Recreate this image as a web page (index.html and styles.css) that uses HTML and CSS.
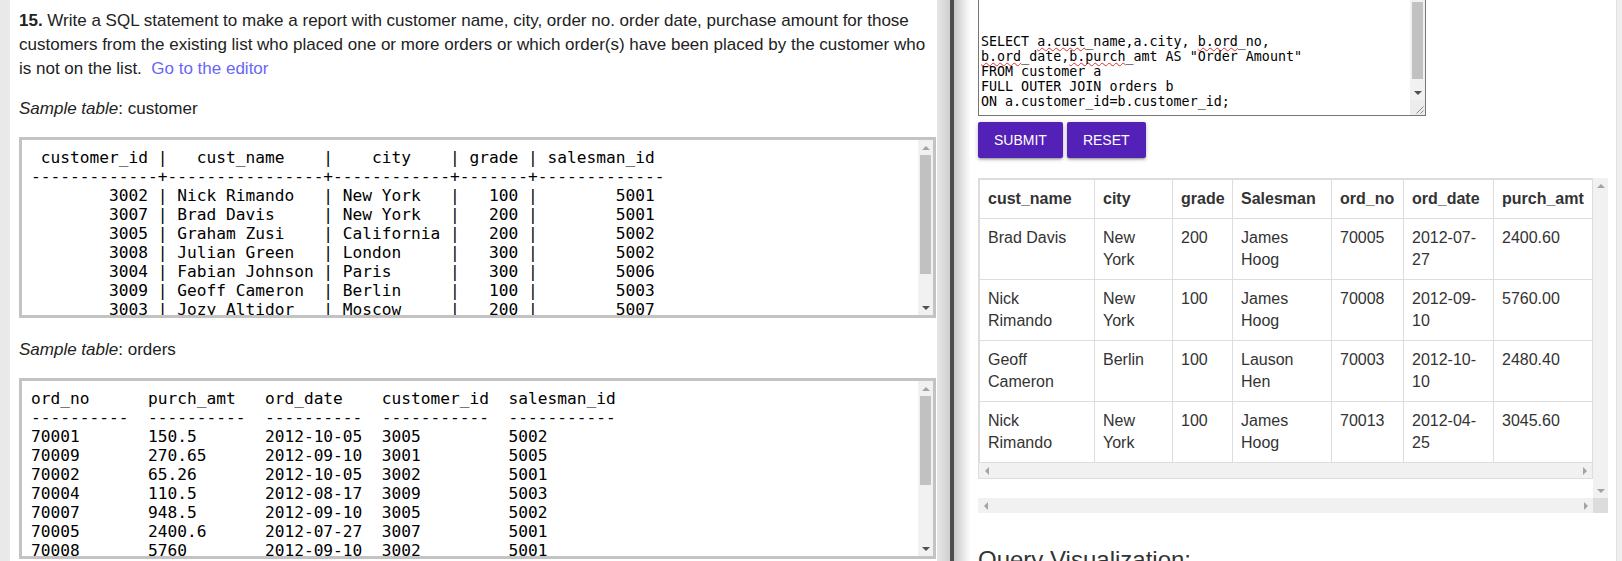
FILE: index.html
```html
<!DOCTYPE html>
<html lang="en">
<head>
<meta charset="utf-8">
<title>SQL Exercise 15</title>
<link rel="stylesheet" href="styles.css">
</head>
<body>
<div class="app">
  <section class="left-pane">
    <p class="question"><strong>15.</strong> Write a SQL statement to make a report with customer name, city, order no. order date, purchase amount for those customers from the existing list who placed one or more orders or which order(s) have been placed by the customer who is not on the list.&nbsp; <a href="#" class="editor-link">Go to the editor</a></p>
    <p class="caption"><em>Sample table</em>: customer</p>
    <div class="sample">
<pre class="sample-text"> customer_id |   cust_name    |    city    | grade | salesman_id
-------------+----------------+------------+-------+-------------
        3002 | Nick Rimando   | New York   |   100 |        5001
        3007 | Brad Davis     | New York   |   200 |        5001
        3005 | Graham Zusi    | California |   200 |        5002
        3008 | Julian Green   | London     |   300 |        5002
        3004 | Fabian Johnson | Paris      |   300 |        5006
        3009 | Geoff Cameron  | Berlin     |   100 |        5003
        3003 | Jozy Altidor   | Moscow     |   200 |        5007
        3001 | Brad Guzan     | London     |       |        5005</pre>
      <div class="vbar">
        <span class="sb-btn up off"></span>
        <span class="sb-track"><span class="sb-thumb thumb-customer"></span></span>
        <span class="sb-btn down"></span>
      </div>
    </div>
    <p class="caption"><em>Sample table</em>: orders</p>
    <div class="sample">
<pre class="sample-text">ord_no      purch_amt   ord_date    customer_id  salesman_id
----------  ----------  ----------  -----------  -----------
70001       150.5       2012-10-05  3005         5002
70009       270.65      2012-09-10  3001         5005
70002       65.26       2012-10-05  3002         5001
70004       110.5       2012-08-17  3009         5003
70007       948.5       2012-09-10  3005         5002
70005       2400.6      2012-07-27  3007         5001
70008       5760        2012-09-10  3002         5001
70010       1983.43     2012-10-10  3004         5006
70003       2480.4      2012-10-10  3009         5003
70012       250.45      2012-06-27  3008         5002
70011       75.29       2012-08-17  3003         5007
70013       3045.6      2012-04-25  3002         5001</pre>
      <div class="vbar">
        <span class="sb-btn up off"></span>
        <span class="sb-track"><span class="sb-thumb thumb-orders"></span></span>
        <span class="sb-btn down"></span>
      </div>
    </div>
  </section>
  <div class="gutter"></div>
  <section class="right-pane">
    <div class="editor">
      <div class="editor-text">


SELECT <span class="typo">a.cust</span>_name,a.city, <span class="typo">b.ord</span>_no,
<span class="typo">b.ord</span>_date,<span class="typo">b.purch</span>_amt AS "Order Amount"
FROM customer a
FULL OUTER JOIN orders b
ON a.customer_id=b.customer_id;</div>
      <div class="editor-side">
        <div class="vbar">
          <span class="sb-btn up off"></span>
          <span class="sb-track"><span class="sb-thumb thumb-editor"></span></span>
          <span class="sb-btn down"></span>
        </div>
        <div class="resizer">
          <svg width="15" height="15" viewBox="0 0 15 15" aria-hidden="true">
            <line x1="13.5" y1="6.5" x2="6.5" y2="13.5" stroke="#8a8a8a" stroke-width="1"/>
            <line x1="13.5" y1="10.5" x2="10.5" y2="13.5" stroke="#8a8a8a" stroke-width="1"/>
          </svg>
        </div>
      </div>
    </div>
    <div class="actions">
      <button class="btn" type="button">SUBMIT</button>
      <button class="btn" type="button">RESET</button>
    </div>
    <div class="result">
      <div class="result-view">
        <div class="table-wrap">
          <table class="result-table">
            <colgroup>
              <col class="c-name"><col class="c-city"><col class="c-grade"><col class="c-sales"><col class="c-ordno"><col class="c-date"><col class="c-amt">
            </colgroup>
            <thead>
              <tr><th>cust_name</th><th>city</th><th>grade</th><th>Salesman</th><th>ord_no</th><th>ord_date</th><th>purch_amt</th></tr>
            </thead>
            <tbody>
              <tr><td>Brad Davis</td><td>New York</td><td>200</td><td>James Hoog</td><td>70005</td><td>2012-07-27</td><td>2400.60</td></tr>
              <tr><td>Nick Rimando</td><td>New York</td><td>100</td><td>James Hoog</td><td>70008</td><td>2012-09-10</td><td>5760.00</td></tr>
              <tr><td>Geoff Cameron</td><td>Berlin</td><td>100</td><td>Lauson Hen</td><td>70003</td><td>2012-10-10</td><td>2480.40</td></tr>
              <tr><td>Nick Rimando</td><td>New York</td><td>100</td><td>James Hoog</td><td>70013</td><td>2012-04-25</td><td>3045.60</td></tr>
            </tbody>
          </table>
          <div class="hbar">
            <span class="sb-btn left off"></span>
            <span class="sb-track"></span>
            <span class="sb-btn right off"></span>
          </div>
        </div>
      </div>
      <div class="vbar">
        <span class="sb-btn up off"></span>
        <span class="sb-track"></span>
        <span class="sb-btn down off"></span>
      </div>
      <div class="hbar">
        <span class="sb-btn left off"></span>
        <span class="sb-track"></span>
        <span class="sb-btn right off"></span>
      </div>
      <div class="sb-corner"></div>
    </div>
    <h3 class="viz-title">Query Visualization:</h3>
  </section>
  <div class="edge"></div>
</div>
</body>
</html>
```

FILE: styles.css
```css
html, body {
  margin: 0;
  padding: 0;
  height: 100%;
  overflow: hidden;
  background: #fff;
}

body {
  font-family: "Liberation Sans", Arial, sans-serif;
  color: #333;
}

.app {
  display: flex;
  height: 561px;
  overflow: hidden;
}

/* ---------- scrollbars (classic look) ---------- */
.vbar {
  display: flex;
  flex-direction: column;
  width: 15px;
  flex: none;
  background: #f1f1f1;
}

.hbar {
  display: flex;
  height: 15px;
  flex: none;
  background: #f1f1f1;
}

.sb-btn {
  flex: none;
  width: 15px;
  height: 15px;
  display: flex;
  align-items: center;
  justify-content: center;
  color: #505050;
}

.sb-btn.off {
  color: #a3a3a3;
}

.sb-btn::before {
  content: "";
  width: 0;
  height: 0;
}

.sb-btn.up::before {
  border-left: 4px solid transparent;
  border-right: 4px solid transparent;
  border-bottom: 4px solid currentColor;
}

.sb-btn.down::before {
  border-left: 4px solid transparent;
  border-right: 4px solid transparent;
  border-top: 4px solid currentColor;
}

.sb-btn.left::before {
  border-top: 4px solid transparent;
  border-bottom: 4px solid transparent;
  border-right: 4px solid currentColor;
}

.sb-btn.right::before {
  border-top: 4px solid transparent;
  border-bottom: 4px solid transparent;
  border-left: 4px solid currentColor;
}

.sb-track {
  flex: 1;
  display: flex;
  flex-direction: column;
}

.sb-thumb {
  margin: 0 2px;
  background: #c1c1c1;
}

.thumb-customer { height: 119px; }
.thumb-orders { height: 89px; }
.thumb-editor { height: 77px; }

.sb-corner {
  background: #dcdcdc;
}

/* ---------- left pane ---------- */
.left-pane {
  flex: none;
  width: 917px;
  border-left: 10px solid #e9e9e9;
  padding: 9px 1px 0 9px;
  overflow: hidden;
  font-size: 17px;
  line-height: 24px;
  color: #222;
}

.question {
  margin: 0 0 16px;
}

.editor-link {
  color: #6767f5;
  text-decoration: none;
}

.caption {
  margin: 0 0 16px;
}

.sample {
  box-sizing: border-box;
  display: flex;
  height: 181px;
  margin: 0 0 20px;
  border: 3px solid #c3c3c3;
  background: #fff;
}

.sample-text {
  flex: 1;
  min-width: 0;
  margin: 0;
  padding: 8px 9px;
  overflow: hidden;
  font-family: "DejaVu Sans Mono", monospace;
  font-size: 16.2px;
  line-height: 19px;
  color: #000;
}

/* ---------- splitter ---------- */
.gutter {
  flex: none;
  width: 33px;
  background: linear-gradient(to right,
    #e6e6e6 0px, #d0d0d0 13px,
    #4e4e4e 13px, #4e4e4e 17px,
    #c9c9c9 17px, #fcfcfc 33px);
}

.edge {
  flex: none;
  width: 5px;
  border-left: 1px solid #e2e2e2;
  background: #efefef;
}

/* ---------- right pane ---------- */
.right-pane {
  flex: 1;
  min-width: 0;
  padding-left: 8px;
  overflow: hidden;
}

.editor {
  box-sizing: border-box;
  display: flex;
  width: 448px;
  height: 130px;
  margin-top: -14px;
  border: 1px solid #767676;
  background: #fff;
}

.editor-text {
  flex: 1;
  min-width: 0;
  padding: 2px;
  overflow: hidden;
  white-space: pre;
  font-family: "DejaVu Sans Mono", monospace;
  font-size: 13.33px;
  line-height: 15px;
  color: #000;
}

.editor-side {
  display: flex;
  flex-direction: column;
  width: 15px;
  flex: none;
}

.editor-side .vbar {
  flex: 1;
}

.resizer {
  flex: none;
  height: 15px;
  background: #ececec;
  line-height: 0;
}

.typo {
  text-decoration: underline wavy #e0302a;
  text-decoration-thickness: 1px;
  text-underline-offset: 1px;
  text-decoration-skip-ink: none;
}

.actions {
  display: flex;
  gap: 4px;
  margin-top: 6px;
}

.btn {
  height: 36px;
  padding: 0 16px;
  border: 0;
  border-radius: 2px;
  background: #5321b7;
  color: #fff;
  font-family: "Liberation Sans", Arial, sans-serif;
  font-size: 14px;
  box-shadow: 0 2px 2px 0 rgba(0, 0, 0, 0.14),
              0 3px 1px -2px rgba(0, 0, 0, 0.12),
              0 1px 5px 0 rgba(0, 0, 0, 0.2);
}

.result {
  display: grid;
  grid-template-columns: 615px 15px;
  grid-template-rows: 320px 15px;
  width: 630px;
  margin-top: 20px;
}

.result-view {
  overflow: hidden;
}

.table-wrap {
  display: flex;
  flex-direction: column;
  border: 1px solid #ddd;
}

.result-table {
  width: 100%;
  table-layout: fixed;
  border-collapse: collapse;
  font-size: 16px;
  line-height: 22px;
  color: #333;
}

.result-table th,
.result-table td {
  padding: 8px;
  border: 1px solid #ddd;
  text-align: left;
  vertical-align: top;
}

.result-table th {
  font-weight: bold;
}

.c-name { width: 115px; }
.c-city { width: 78px; }
.c-grade { width: 60px; }
.c-sales { width: 99px; }
.c-ordno { width: 72px; }
.c-date { width: 90px; }
.c-amt { width: 99px; }

.viz-title {
  margin: 34px 0 0;
  font-size: 24px;
  font-weight: normal;
  line-height: 1.1;
  color: #333;
}
```
